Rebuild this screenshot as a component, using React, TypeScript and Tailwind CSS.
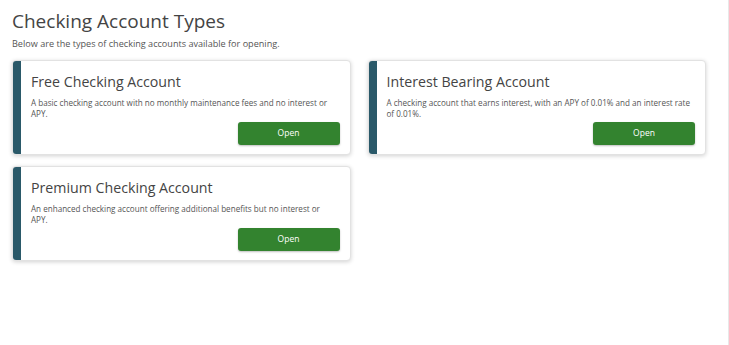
const accounts = [
  {
    name: "Free Checking Account",
    description:
      "A basic checking account with no monthly maintenance fees and no interest or APY.",
  },
  {
    name: "Interest Bearing Account",
    description:
      "A checking account that earns interest, with an APY of 0.01% and an interest rate of 0.01%.",
  },
  {
    name: "Premium Checking Account",
    description:
      "An enhanced checking account offering additional benefits but no interest or APY.",
  },
];

function AccountCard({ name, description }: { name: string; description: string }) {
  return (
    <div className="flex h-[95px] rounded-[4px] bg-white border border-[#e2e2e2] shadow-[0_1px_4px_rgba(0,0,0,0.18)] overflow-hidden">
      <div className="w-[8px] shrink-0 bg-[#2a5969]" />
      <div className="flex flex-1 flex-col pl-[10px] pr-[10px] pt-[11px] pb-[9px]">
        <h2 className="text-[14.2px] leading-[20px] font-medium text-[#444]">{name}</h2>
        <p className="mt-[5px] max-w-[306px] text-[8.1px] leading-[11px] text-[#555]">{description}</p>
        <div className="flex justify-end mt-auto">
          <button
            type="button"
            className="w-[102px] h-[23px] rounded-[3px] bg-[#33832f] text-white text-[8.5px] font-medium shadow-[0_1px_2px_rgba(0,0,0,0.25)]"
          >
            Open
          </button>
        </div>
      </div>
    </div>
  );
}

export default function App() {
  return (
    <div className="min-h-[345px] bg-white border-r border-[#e8e8e8] w-[729px] font-['Open_Sans',sans-serif]">
      <div className="pl-[12px] pt-[7px] w-[706px]">
        <h1 className="text-[19px] leading-[28px] text-[#444]">Checking Account Types</h1>
        <p className="mt-[3px] text-[9.1px] leading-[12px] text-[#555]">
          Below are the types of checking accounts available for opening.
        </p>
        <div className="grid grid-cols-2 gap-x-[17px] gap-y-[11px] mt-[10px]">
          {accounts.map((a) => (
            <AccountCard key={a.name} name={a.name} description={a.description} />
          ))}
        </div>
      </div>
    </div>
  );
}
